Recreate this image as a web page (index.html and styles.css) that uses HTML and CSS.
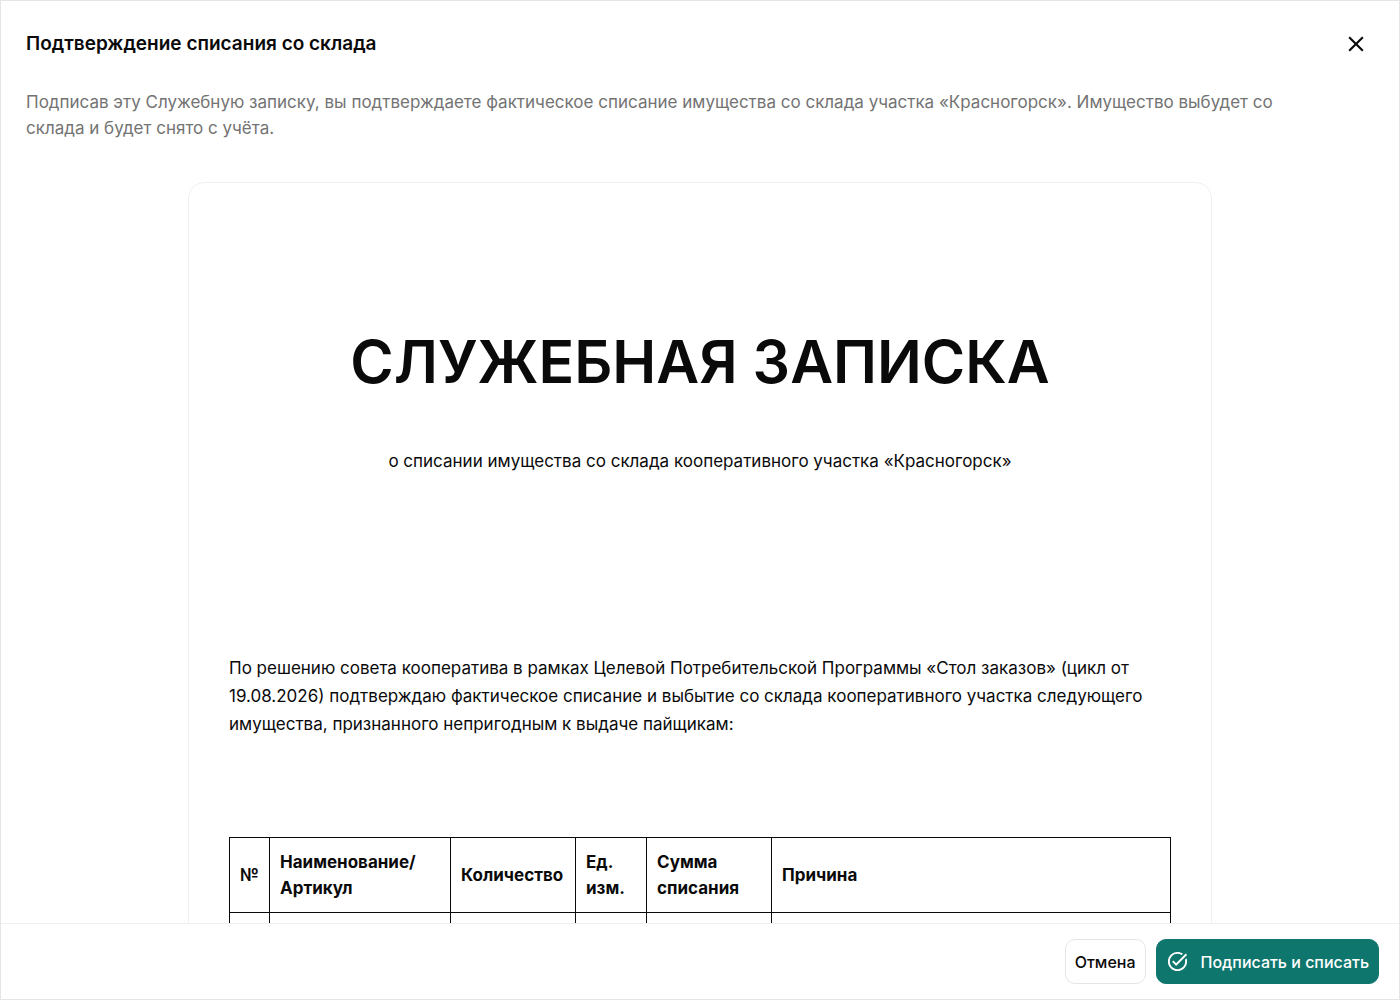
FILE: index.html
```
<!DOCTYPE html>
<html lang="ru">
<head>
    <meta charset="UTF-8">
    <meta name="viewport" content="width=device-width, initial-scale=1.0">
    <title>Подтверждение списания со склада</title>
    <link rel="stylesheet" href="styles.css">
</head>
<body>
    <div class="dialog" role="dialog" aria-labelledby="dialog-title">
        <header class="dialog-header">
            <h2 class="dialog-title" id="dialog-title">Подтверждение списания со склада</h2>
            <button class="close-button" type="button" aria-label="Закрыть">
                <svg viewBox="0 0 24 24" width="26" height="26" fill="currentColor" aria-hidden="true">
                    <path d="M19 6.41L17.59 5 12 10.59 6.41 5 5 6.41 10.59 12 5 17.59 6.41 19 12 13.41 17.59 19 19 17.59 13.41 12z"/>
                </svg>
            </button>
        </header>

        <main class="dialog-body">
            <p class="hint">Подписав эту Служебную записку, вы подтверждаете фактическое списание имущества со склада участка «Красногорск». Имущество выбудет со склада и будет снято с учёта.</p>

            <article class="document">
                <h1 class="document-title">СЛУЖЕБНАЯ ЗАПИСКА</h1>
                <p class="document-subtitle">о списании имущества со склада кооперативного участка «Красногорск»</p>
                <p class="document-text">По решению совета кооператива в рамках Целевой Потребительской Программы «Стол заказов» (цикл от 19.08.2026) подтверждаю фактическое списание и выбытие со склада кооперативного участка следующего имущества, признанного непригодным к выдаче пайщикам:</p>

                <table class="items">
                    <colgroup>
                        <col class="col-number">
                        <col class="col-name">
                        <col class="col-count">
                        <col class="col-unit">
                        <col class="col-sum">
                        <col>
                    </colgroup>
                    <thead>
                        <tr>
                            <th scope="col">№</th>
                            <th scope="col">Наименование/<br>Артикул</th>
                            <th scope="col">Количество</th>
                            <th scope="col">Ед. изм.</th>
                            <th scope="col">Сумма списания</th>
                            <th scope="col">Причина</th>
                        </tr>
                    </thead>
                    <tbody>
                        <tr>
                            <td></td>
                            <td></td>
                            <td></td>
                            <td></td>
                            <td></td>
                            <td></td>
                        </tr>
                    </tbody>
                </table>
            </article>
        </main>

        <footer class="dialog-footer">
            <button class="button" type="button">Отмена</button>
            <button class="button button-primary" type="button">
                <svg viewBox="0 0 24 24" width="23" height="23" fill="currentColor" aria-hidden="true">
                    <path d="M22 5.18L10.59 16.6l-4.24-4.24 1.41-1.41 2.83 2.83 10-10L22 5.18zM19.79 10.22c.13.57.21 1.17.21 1.78 0 4.42-3.58 8-8 8s-8-3.58-8-8 3.58-8 8-8c1.58 0 3.04.46 4.28 1.25l1.44-1.44C16.1 2.67 14.13 2 12 2 6.48 2 2 6.48 2 12s4.48 10 10 10 10-4.48 10-10c0-1.19-.22-2.33-.6-3.39l-1.61 1.61z"/>
                </svg>
                Подписать и списать
            </button>
        </footer>
    </div>
</body>
</html>
```
FILE: styles.css
```
:root {
    --text: #0a0a0b;
    --muted: #737373;
    --border: #e5e5e5;
    --border-light: #f0f0f0;
    --primary: #0f766e;
}

* {
    box-sizing: border-box;
}

body {
    margin: 0;
    font-family: 'Inter', sans-serif;
    font-size: 17px;
    line-height: 26px;
    color: var(--text);
    background: #fff;
}

h1,
h2,
p {
    margin: 0;
}

.dialog {
    display: flex;
    flex-direction: column;
    height: 100vh;
    border: 1px solid var(--border);
}

.dialog-header {
    display: flex;
    align-items: center;
    justify-content: space-between;
    padding: 20px 20px 20px 25px;
}

.dialog-title {
    font-size: 19px;
    font-weight: 600;
}

.close-button {
    display: flex;
    align-items: center;
    justify-content: center;
    width: 46px;
    height: 46px;
    padding: 0;
    border: none;
    border-radius: 10px;
    background: none;
    color: inherit;
    cursor: pointer;
}

.dialog-body {
    flex: 1;
    min-height: 0;
    padding: 2px 25px 0;
    overflow: hidden;
}

.hint {
    max-width: 1300px;
    color: var(--muted);
}

.document {
    max-width: 1024px;
    margin: 41px auto 0;
    padding: 124px 40px 40px;
    border: 1px solid var(--border-light);
    border-radius: 16px;
}

.document-title {
    font-size: 59px;
    font-weight: 600;
    line-height: 110px;
    text-align: center;
}

.document-subtitle {
    margin-top: 30px;
    line-height: 28px;
    text-align: center;
}

.document-text {
    margin-top: 179px;
    line-height: 28px;
}

.items {
    width: 100%;
    margin-top: 99px;
    border-collapse: collapse;
    table-layout: fixed;
}

.items th,
.items td {
    height: 75px;
    padding: 10px;
    border: 1px solid var(--text);
    text-align: left;
}

.items th {
    font-weight: 700;
}

.col-number {
    width: 40px;
}

.col-name {
    width: 181px;
}

.col-count,
.col-sum {
    width: 125px;
}

.col-unit {
    width: 71px;
}

.dialog-footer {
    display: flex;
    justify-content: flex-end;
    gap: 10px;
    padding: 15px 20px;
    border-top: 1px solid var(--border-light);
}

.button {
    display: flex;
    align-items: center;
    justify-content: center;
    gap: 12px;
    height: 45px;
    padding: 0 9px;
    border: 1px solid var(--border);
    border-radius: 10px;
    background: #fff;
    color: inherit;
    font: inherit;
    font-size: 16px;
    font-weight: 500;
    cursor: pointer;
}

.button-primary {
    border-color: var(--primary);
    background: var(--primary);
    color: #fff;
}
```
